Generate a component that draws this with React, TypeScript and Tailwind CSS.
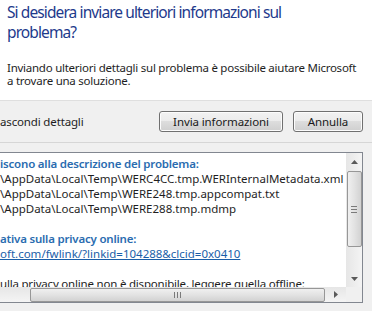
import React from 'react';

function Arrow({ dir }: { dir: 'up' | 'down' | 'right' }) {
  const pts = dir === 'up' ? '0,4 3.5,0 7,4' : dir === 'down' ? '0,0 7,0 3.5,4' : '0,0 4,3.5 0,7';
  const w = dir === 'right' ? 4 : 7;
  const h = dir === 'right' ? 7 : 4;
  return (
    <svg width={w} height={h} viewBox={`0 0 ${w} ${h}`}>
      <polygon points={pts} fill="#5a5a5a" />
    </svg>
  );
}

function Win7Button({ children, className }: { children: React.ReactNode; className?: string }) {
  return (
    <button
      className={`h-[21px] rounded-[3px] border border-[#707070] bg-[linear-gradient(#f2f2f2_0%,#ebebeb_50%,#dddddd_50%,#cfcfcf_100%)] shadow-[inset_0_0_0_1px_#fcfcfc] text-[11.5px] text-[#1a1a1a] tracking-[-0.1px] ${className ?? ''}`}
    >
      {children}
    </button>
  );
}

export default function App() {
  const lines: { text: string; kind: 'head' | 'path' | 'link' | 'blank' | 'plain' }[] = [
    { text: 'iscono alla descrizione del problema:', kind: 'head' },
    { text: '\\AppData\\Local\\Temp\\WERC4CC.tmp.WERInternalMetadata.xml', kind: 'path' },
    { text: '\\AppData\\Local\\Temp\\WERE248.tmp.appcompat.txt', kind: 'path' },
    { text: '\\AppData\\Local\\Temp\\WERE288.tmp.mdmp', kind: 'path' },
    { text: '', kind: 'blank' },
    { text: 'ativa sulla privacy online:', kind: 'head' },
    { text: 'oft.com/fwlink/?linkid=104288&clcid=0x0410', kind: 'link' },
    { text: '', kind: 'blank' },
    { text: 'ulla privacy online non è disponibile, leggere quella offline:', kind: 'plain' },
  ];

  return (
    <div className="w-[372px] h-[311px] overflow-hidden bg-[#f0f0f0] font-['Segoe_UI','Noto_Sans',sans-serif]">
      {/* Main instruction area */}
      <div className="h-[101px] bg-white border-b border-[#dfdfdf] pl-[7px] pt-[2px] whitespace-nowrap">
        <div className="text-[15.5px] leading-[20px] tracking-[-0.9px] text-[#1e3a8c]">
          <div>Si desidera inviare ulteriori informazioni sul</div>
          <div>problema?</div>
        </div>
        <p className="mt-[19px] text-[11.5px] leading-[13px] tracking-[-0.25px] text-[#1e1e1e]">
          Inviando ulteriori dettagli sul problema è possibile aiutare Microsoft
          <br />a trovare una soluzione.
        </p>
      </div>

      {/* Command row */}
      <div className="h-[42px] flex items-center justify-between pr-[9px] border-b border-[#d6d6d6]">
        <span className="text-[11.5px] tracking-[-0.15px] text-[#1e1e1e]">ascondi dettagli</span>
        <div className="flex gap-[10px]">
          <Win7Button className="w-[124px]">Invia informazioni</Win7Button>
          <Win7Button className="w-[70px]">Annulla</Win7Button>
        </div>
      </div>

      {/* Details box */}
      <div className="pt-[9px] pr-[9px]">
        <div className="h-[151px] border-y border-r border-[#828790] bg-white grid grid-cols-[1fr_16px] grid-rows-[1fr_15px]">
          <div className="overflow-hidden pt-[3px] text-[11.5px] leading-[15px] whitespace-nowrap">
            {lines.map((l, i) => (
              <div
                key={i}
                className={
                  l.kind === 'head'
                    ? 'h-[15px] font-semibold tracking-[-0.2px] text-[#2a6cb0]'
                    : l.kind === 'link'
                    ? 'h-[15px] text-[#1a5ea8] underline'
                    : l.kind === 'plain'
                    ? 'h-[15px] tracking-[-0.2px] text-[#1e1e1e]'
                    : 'h-[15px] text-[#1e1e1e]'
                }
              >
                {l.text}
              </div>
            ))}
          </div>

          {/* Vertical scrollbar */}
          <div className="bg-[linear-gradient(90deg,#e6e6e6,#f4f4f4)] flex flex-col items-center">
            <div className="h-[18px] flex items-center justify-center">
              <Arrow dir="up" />
            </div>
            <div className="w-[15px] h-[76px] rounded-[2px] border border-[#979797] bg-[linear-gradient(90deg,#f0f0f0,#e2e2e2_50%,#d2d2d2)] flex items-center justify-center">
              <div className="flex flex-col gap-[2px]">
                <div className="w-[6px] h-px bg-[#7a7a7a]" />
                <div className="w-[6px] h-px bg-[#7a7a7a]" />
                <div className="w-[6px] h-px bg-[#7a7a7a]" />
              </div>
            </div>
            <div className="flex-1" />
            <div className="h-[17px] flex items-center justify-center">
              <Arrow dir="down" />
            </div>
          </div>

          {/* Horizontal scrollbar */}
          <div className="bg-[linear-gradient(#e6e6e6,#f4f4f4)] flex items-center">
            <div className="w-[30px]" />
            <div className="w-[295px] h-[14px] rounded-[2px] border border-[#979797] bg-[linear-gradient(#f0f0f0,#e2e2e2_50%,#d2d2d2)] flex items-center justify-center">
              <div className="flex gap-[2px]">
                <div className="w-px h-[6px] bg-[#7a7a7a]" />
                <div className="w-px h-[6px] bg-[#7a7a7a]" />
                <div className="w-px h-[6px] bg-[#7a7a7a]" />
              </div>
            </div>
            <div className="flex-1 flex items-center justify-center">
              <Arrow dir="right" />
            </div>
          </div>
          <div className="bg-[#f0f0f0]" />
        </div>
      </div>
    </div>
  );
}
